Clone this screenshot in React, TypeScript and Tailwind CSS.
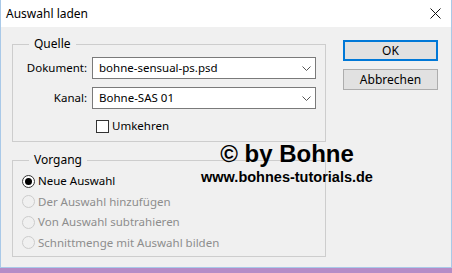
import React from 'react';

const Chevron = () => (
  <svg width="9" height="5" viewBox="0 0 9 5" className="mr-[4px]">
    <path d="M0.5 0.5 L4.5 4.5 L8.5 0.5" fill="none" stroke="#555" strokeWidth="1" />
  </svg>
);

const Combo = ({ value }: { value: string }) => (
  <div className="flex h-[22px] w-[224px] items-center justify-between border border-[#7a7a7a] bg-white pl-[6px]">
    <span>{value}</span>
    <Chevron />
  </div>
);

const Radio = ({ label, checked, disabled }: { label: string; checked?: boolean; disabled?: boolean }) => (
  <div className="flex h-[20.5px] items-center">
    <span
      className={`flex h-[13px] w-[13px] items-center justify-center rounded-full border ${
        disabled ? 'border-[#cccccc] bg-[#f0f0f0]' : 'border-[#333] bg-white'
      }`}
    >
      {checked && <span className="h-[7px] w-[7px] rounded-full bg-black" />}
    </span>
    <span className={`ml-[3px] ${disabled ? 'text-[#8d8d8d]' : 'text-black'}`}>{label}</span>
  </div>
);

export default function App() {
  return (
    <div className="relative h-[273px] w-[452px] overflow-hidden bg-[#b58cc7] font-['Segoe_UI','Noto_Sans',sans-serif] text-[11.5px] leading-[16px] text-black">
      <div className="flex h-[268px] flex-col border-x border-b border-[#a9c9e8] bg-[#f0f0f0]">
        {/* title bar */}
        <div className="flex h-[27px] shrink-0 items-center justify-between bg-white pl-[5px] pr-[10px]">
          <span className="text-[12px]">Auswahl laden</span>
          <svg width="11" height="11" viewBox="0 0 11 11">
            <path d="M0.5 0.5 L10.5 10.5 M10.5 0.5 L0.5 10.5" stroke="#111" strokeWidth="1" />
          </svg>
        </div>

        <div className="flex pl-[11px] pt-[9px]">
          {/* left column */}
          <div className="flex flex-col">
            <fieldset className="h-[106px] w-[314px] border border-[#cdcdcd]">
              <legend className="ml-[16px] px-[5px] text-[12px]">Quelle</legend>
              <div className="mt-[5px] grid grid-cols-[74px_224px] items-center gap-x-[5px] gap-y-[8px]">
                <span className="text-right">Dokument:</span>
                <Combo value="bohne-sensual-ps.psd" />
                <span className="text-right">Kanal:</span>
                <Combo value="Bohne-SAS 01" />
                <span />
                <div className="mt-[1px] flex items-center pl-[4px]">
                  <span className="h-[13px] w-[13px] border border-[#333] bg-white" />
                  <span className="ml-[3px]">Umkehren</span>
                </div>
              </div>
            </fieldset>

            <fieldset className="mt-[10px] h-[105px] w-[314px] border border-[#cdcdcd] pl-[9px]">
              <legend className="ml-[7px] px-[5px] text-[12px]">Vorgang</legend>
              <div className="mt-[3px] flex flex-col">
                <Radio label="Neue Auswahl" checked />
                <Radio label="Der Auswahl hinzufügen" disabled />
                <Radio label="Von Auswahl subtrahieren" disabled />
                <Radio label="Schnittmenge mit Auswahl bilden" disabled />
              </div>
            </fieldset>
          </div>

          {/* right column */}
          <div className="ml-[17px] mt-[4px] flex flex-col gap-[8px]">
            <button className="h-[21px] w-[95px] border-2 border-[#0078d7] bg-[#e1e1e1] text-[12px]">OK</button>
            <button className="h-[21px] w-[95px] border border-[#adadad] bg-[#e1e1e1] text-[12px]">Abbrechen</button>
          </div>
        </div>
      </div>

      {/* watermark overlay */}
      <div className="pointer-events-none absolute left-[199px] top-[140px] flex w-[176px] flex-col items-center font-['Liberation_Sans',Arial,sans-serif] font-bold text-black">
        <span className="text-[24px] leading-[28px]">© by Bohne</span>
        <span className="mt-[1px] text-[14.5px] leading-[17px]">www.bohnes-tutorials.de</span>
      </div>
    </div>
  );
}
